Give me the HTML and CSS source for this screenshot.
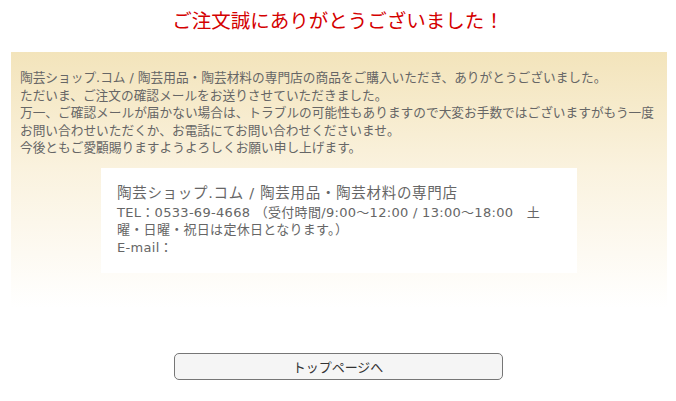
FILE: index.html
```html
<!DOCTYPE html>
<html lang="ja">
<head>
  <meta charset="UTF-8">
  <meta name="viewport" content="width=device-width, initial-scale=1.0">
  <title>ご注文ありがとうございました</title>
  <link rel="stylesheet" href="styles.css">
</head>
<body>
  <h1 class="thanks-title">ご注文誠にありがとうございました！</h1>

  <div class="thanks-box">
    <p class="thanks-msg">
      陶芸ショップ.コム / 陶芸用品・陶芸材料の専門店の商品をご購入いただき、ありがとうございました。<br>
      ただいま、ご注文の確認メールをお送りさせていただきました。<br>
      万一、ご確認メールが届かない場合は、トラブルの可能性もありますので大変お手数ではございますがもう一度お問い合わせいただくか、お電話にてお問い合わせくださいませ。<br>
      今後ともご愛顧賜りますようよろしくお願い申し上げます。
    </p>

    <div class="shop-info">
      <p class="shop-name">陶芸ショップ.コム / 陶芸用品・陶芸材料の専門店</p>
      <p class="shop-contact">
        TEL：0533-69-4668 （受付時間/9:00～12:00 / 13:00～18:00　土曜・日曜・祝日は定休日となります。）<br>
        E-mail：
      </p>
    </div>
  </div>

  <div class="back">
    <button class="back-btn" onclick="location.href='/'">トップページへ</button>
  </div>
</body>
</html>
```

FILE: styles.css
```css
body {
  margin: 8px;
  font-family: "DejaVu Sans", "Noto Sans CJK JP", sans-serif;
  color: #666;
  background: #fff;
}
.thanks-title {
  margin: 0;
  padding-top: 2px;
  height: 42px;
  line-height: 24px;
  font-size: 19.5px;
  font-weight: normal;
  color: #d40000;
  text-align: center;
}
.thanks-box {
  margin: 0 1px 0 3px;
  padding: 17px 9px 35px 9px;
  background: linear-gradient(to bottom, #f3e4bb 0%, #faf2de 45%, #ffffff 100%);
}
.thanks-msg {
  margin: 0;
  font-size: 12.7px;
  line-height: 17.5px;
}
.shop-info {
  margin: 11px auto 0;
  width: 444px;
  padding: 15px 16px 17px;
  background: #fff;
}
.shop-name {
  margin: 0;
  font-size: 14.5px;
  letter-spacing: 0.7px;
  line-height: 20px;
}
.shop-contact {
  margin: 1px 0 0;
  font-size: 13px;
  letter-spacing: 0.3px;
  line-height: 17.5px;
}
.back {
  margin-top: 45px;
  text-align: center;
}
.back-btn {
  width: 329px;
  height: 27px;
  padding: 0;
  font-family: "Noto Sans CJK JP", sans-serif;
  font-size: 13px;
  color: #333;
  background: #f5f5f5;
  border: 1px solid #767676;
  border-radius: 5px;
  cursor: pointer;
}
```
